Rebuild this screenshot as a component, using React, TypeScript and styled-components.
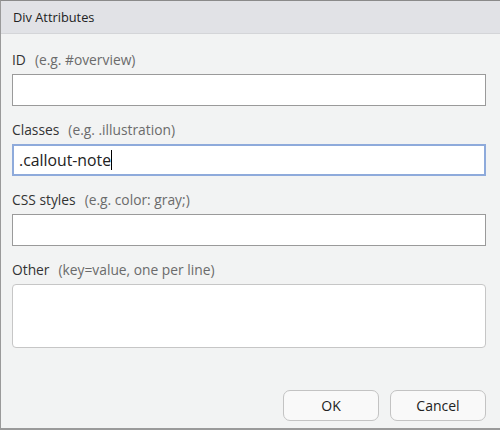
import React from "react";
import styled, { createGlobalStyle } from "styled-components";

const Global = createGlobalStyle`
  html, body { margin: 0; padding: 0; background: #f2f3f3; }
  body { font-family: "Open Sans", "Noto Sans", "Liberation Sans", sans-serif; }
  * { box-sizing: border-box; }
`;

const Window = styled.div`
  width: 500px;
  height: 430px;
  display: flex;
  flex-direction: column;
  background: #f2f3f3;
  border-top: 1px solid #8a8a8a;
  border-left: 1px solid #9a9a9a;
  border-bottom: 2px solid #9a9a9a;
`;

const TitleBar = styled.div`
  height: 33px;
  flex: none;
  display: flex;
  align-items: center;
  padding-left: 12px;
  background: #e1e2e6;
  border-bottom: 1px solid #d4d5d8;
  font-size: 12.8px;
  color: #222;
`;

const Body = styled.div`
  flex: 1;
  display: flex;
  flex-direction: column;
  padding: 16px 14px 0 11px;
`;

const Field = styled.div`
  display: flex;
  flex-direction: column;
  gap: 4px;
  margin-bottom: 14px;
`;

const Label = styled.div`
  height: 20px;
  line-height: 20px;
  font-size: 13.8px;
  color: #333;
  white-space: nowrap;
`;

const Hint = styled.span`
  color: #6b6b6b;
  margin-left: 9px;
`;

const Input = styled.div<{ $focused?: boolean }>`
  height: 32px;
  background: #fff;
  border: ${(p) => (p.$focused ? "2px solid #8eaadb" : "1px solid #9a9a9a")};
  display: flex;
  align-items: center;
  padding-left: ${(p) => (p.$focused ? "5px" : "6px")};
  font-size: 15.8px;
  color: #222;
`;

const Caret = styled.span`
  display: inline-block;
  width: 1px;
  height: 20px;
  background: #000;
`;

const TextArea = styled.div`
  height: 64px;
  background: #fff;
  border: 1px solid #c6c6c6;
  border-radius: 4px;
`;

const Footer = styled.div`
  margin-top: auto;
  display: flex;
  justify-content: flex-end;
  gap: 11px;
  padding: 0 0 7px 0;
`;

const Button = styled.button`
  width: 96px;
  height: 31px;
  border: 1px solid #c3c3c3;
  border-radius: 7px;
  background: #f9f9f9;
  font-family: inherit;
  font-size: 14px;
  color: #222;
  padding: 0;
`;

export default function App() {
  return (
    <>
      <Global />
      <Window>
        <TitleBar>Div Attributes</TitleBar>
        <Body>
          <Field>
            <Label>
              ID<Hint>(e.g. #overview)</Hint>
            </Label>
            <Input />
          </Field>
          <Field>
            <Label>
              Classes<Hint>(e.g. .illustration)</Hint>
            </Label>
            <Input $focused>
              .callout-note
              <Caret />
            </Input>
          </Field>
          <Field>
            <Label>
              CSS styles<Hint>(e.g. color: gray;)</Hint>
            </Label>
            <Input />
          </Field>
          <Field>
            <Label>
              Other<Hint>(key=value, one per line)</Hint>
            </Label>
            <TextArea />
          </Field>
          <Footer>
            <Button>OK</Button>
            <Button>Cancel</Button>
          </Footer>
        </Body>
      </Window>
    </>
  );
}
